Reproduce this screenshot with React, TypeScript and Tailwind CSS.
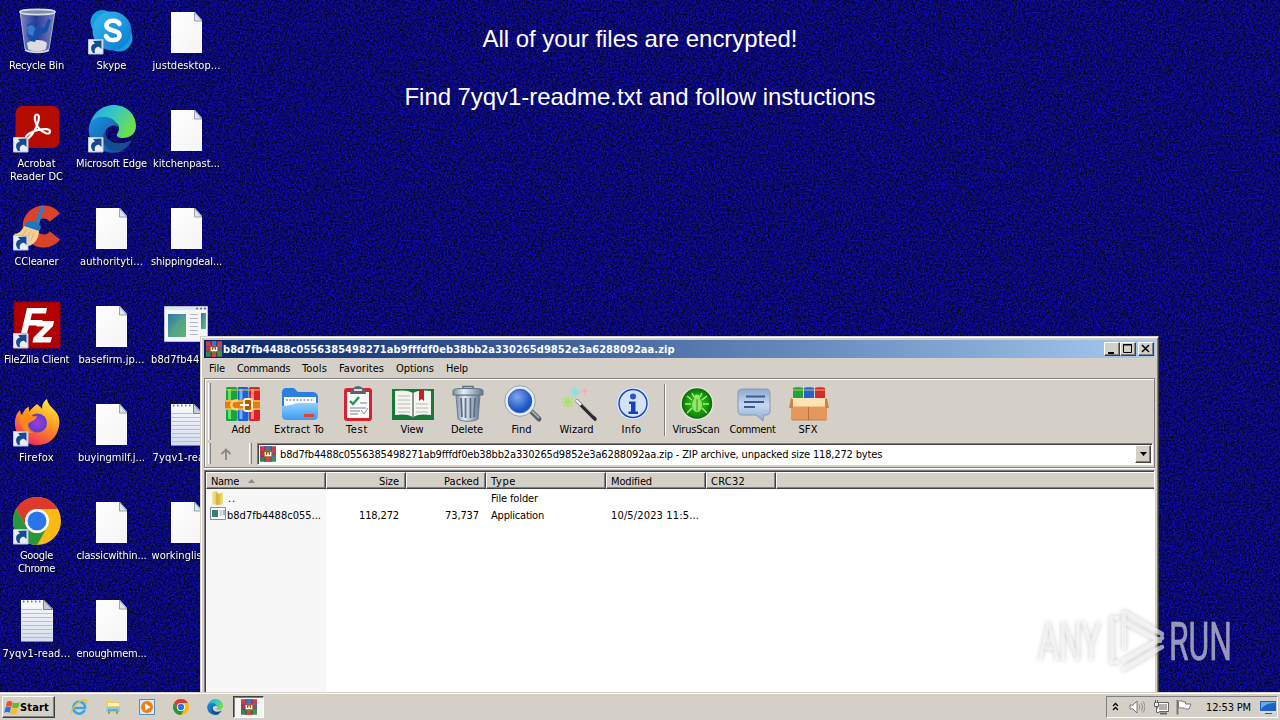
import { useLayoutEffect, useRef, useState, type ReactNode } from "react";

/* Text whose tracking is adjusted so that it spans a given width. */
function Fit({ w, children, className = "" }: { w?: number; children: string; className?: string }) {
  const ref = useRef<HTMLSpanElement>(null);
  const [space, setSpace] = useState(0);
  useLayoutEffect(() => {
    if (ref.current && w) {
      const natural = ref.current.getBoundingClientRect().width;
      setSpace((w - natural) / children.length);
    }
  }, [w, children]);
  return (
    <span ref={ref} className={"inline-block whitespace-pre " + className} style={{ letterSpacing: space }}>
      {children}
    </span>
  );
}

function Defs() {
  return (
    <svg className="absolute h-0 w-0" aria-hidden="true">
      <defs>
        <linearGradient id="sky" x1="0" y1="0" x2="1" y2="1"><stop offset="0" stopColor="#35b8ee" /><stop offset="1" stopColor="#0a78d0" /></linearGradient>
        <linearGradient id="edgeTop" x1="0" y1="0" x2="1" y2=".5"><stop offset="0" stopColor="#1fa0dc" /><stop offset=".5" stopColor="#35c6c8" /><stop offset="1" stopColor="#6be04a" /></linearGradient>
        <linearGradient id="edgeLow" x1="0" y1="0" x2="1" y2="1"><stop offset="0" stopColor="#1b8fe0" /><stop offset="1" stopColor="#124f9c" /></linearGradient>
        <linearGradient id="fox" x1=".8" y1="0" x2=".3" y2="1"><stop offset="0" stopColor="#fff04a" /><stop offset=".45" stopColor="#ff9a1f" /><stop offset="1" stopColor="#f0265e" /></linearGradient>
        <radialGradient id="foxCore"><stop offset="0" stopColor="#a03be0" /><stop offset="1" stopColor="#5a3fc8" /></radialGradient>
        <linearGradient id="paper" x1="0" y1="0" x2="1" y2="1"><stop offset="0" stopColor="#ffffff" /><stop offset="1" stopColor="#f4f4f6" /></linearGradient>
        <linearGradient id="note" x1="0" y1="0" x2="0" y2="1"><stop offset="0" stopColor="#fbfbfd" /><stop offset="1" stopColor="#d3dcec" /></linearGradient>
        <linearGradient id="metal" x1="0" y1="0" x2="1" y2="0"><stop offset="0" stopColor="#7c8ea4" /><stop offset=".35" stopColor="#e6edf4" /><stop offset=".7" stopColor="#9fb0c4" /><stop offset="1" stopColor="#63758c" /></linearGradient>
        <linearGradient id="folder" x1="0" y1="0" x2="0" y2="1"><stop offset="0" stopColor="#8fd0ff" /><stop offset="1" stopColor="#3c9bf2" /></linearGradient>
        <linearGradient id="chat" x1="0" y1="0" x2="0" y2="1"><stop offset="0" stopColor="#8fa9cf" /><stop offset=".5" stopColor="#c6d8ee" /><stop offset="1" stopColor="#8fabd2" /></linearGradient>
        <radialGradient id="lens" cx=".4" cy=".35"><stop offset="0" stopColor="#7fa8ee" /><stop offset="1" stopColor="#1c55c8" /></radialGradient>
        <radialGradient id="green"><stop offset="0" stopColor="#3fe01e" /><stop offset="1" stopColor="#0b7f08" /></radialGradient>
        <linearGradient id="app" x1="0" y1="0" x2="1" y2="1"><stop offset="0" stopColor="#2f78a8" /><stop offset="1" stopColor="#6fc07a" /></linearGradient>
        <linearGradient id="glass" x1="0" y1="0" x2="1" y2="0"><stop offset="0" stopColor="#a9b8d8" stopOpacity=".75" /><stop offset=".45" stopColor="#3a52b0" stopOpacity=".65" /><stop offset="1" stopColor="#a9b8d8" stopOpacity=".7" /></linearGradient>
        <linearGradient id="gold" x1="0" y1="0" x2="1" y2="0"><stop offset="0" stopColor="#f6ea9c" /><stop offset=".6" stopColor="#ddb93c" /><stop offset="1" stopColor="#f3e28a" /></linearGradient>
      </defs>
    </svg>
  );
}

function Noise() {
  return (
    <svg className="absolute inset-0" width="1280" height="720">
      <filter id="grain" x="0" y="0" width="100%" height="100%" colorInterpolationFilters="sRGB">
        <feTurbulence type="fractalNoise" baseFrequency="0.57" numOctaves="3" seed="4" />
        <feColorMatrix values="0.08 0.1 0 0 -0.05  0.08 0.1 0 0 -0.055  1.2 0 0 0 -0.16  0 0 0 0 1" />
      </filter>
      <rect width="1280" height="720" filter="url(#grain)" />
    </svg>
  );
}

const Shortcut = () => (
  <g>
    <path d="M.5 32.500h14.500v14.500h-14.500z" fill="#e6ebf4" stroke="#b8c4d8" />
    <path d="M5 46c-3-4-2.500-8.500 2-9.500l-2-2.500 8.500-.5v8.500l-2.500-2.200c-3 0-5 2-4 6.200z" fill="#164a90" />
  </g>
);

const RecycleBin = () => (
  <>
    <path d="M7 4l5 38c3 4 20 4 24 0l6-38z" fill="url(#glass)" stroke="#a8b4c8" />
    <path d="M14 36c4-4 17-4 20 0l-1 6c-3 3-15 3-18 0z" fill="#dcdce0" />
    <path d="M14 19c3-5 8-3 9 1l8 1 4-9 3 1-4 12-9 3-3 7-5-1-3-6z" fill="#174fa8" />
    <path d="M14 20c3-3 7-2 8 2l-2 7-5-2z" fill="#3a78d0" />
    <ellipse cx="24.500" cy="5" rx="17.500" ry="2.600" fill="#7d8da6" stroke="#d8dde6" strokeWidth="1.600" />
    <path d="M12 43c5 3 20 3 24 0" stroke="#d8d8d8" strokeWidth="2" fill="none" />
  </>
);
const Skype = () => (
  <>
    <g fill="#159fe2"><circle cx="14.500" cy="15" r="12" /><circle cx="31" cy="31" r="13.500" /></g>
    <circle cx="24" cy="24" r="19.500" fill="url(#sky)" />
    <path d="M31.500 17c-2-4.500-13-4.500-13 1.500 0 6.500 13 3.500 13 10 0 6-11.500 6-13.500.5" stroke="#fff" strokeWidth="4.600" strokeLinecap="round" fill="none" />
    <Shortcut />
  </>
);
const Acrobat = () => (
  <>
    <rect x="2.500" y="1" width="44" height="42" rx="7" fill="#b60b00" />
    <path d="M13 33c-1-3 6-6.500 12-8 7-1.600 12-1.200 12 1.500 0 4-7 1.500-11-3-4-4-6-14-2-14s1 11-3 17c-3 5-7 8.500-8 6.500z" fill="none" stroke="#fff" strokeWidth="2.200" />
    <Shortcut />
  </>
);
const EdgeMark = () => (
  <>
    <path d="M1 24C3 9 13 0 26 0c12 0 22 9 22 21 0 8-6 12-13 12-5 0-7-2-6-4 5-7 0-13-7-13C12 16 4 17 1 24z" fill="url(#edgeTop)" />
    <path d="M1 22c1-7 9-11 17-10 7 1 11 5 12 10-5-4-13 0-13 7 0 9 9 18 20 16C22 53-2 43 1 22z" fill="url(#edgeLow)" />
    <path d="M18 26c-2 9 8 13 15 12 5 0 9-2 11-4-2 7-9 13-17 12-11-1-16-13-9-20z" fill="#154b91" />
  </>
);
const Edge = () => (<><EdgeMark /><Shortcut /></>);
const CCleaner = () => (
  <>
    <path d="M42 14.500A14.500 14.500 0 1 0 42 32.500" stroke="#d9432c" strokeWidth="13" fill="none" />
    <path d="M28 3c2-1 3 0 3 2l-5 17-4-2z" fill="#2b7fc4" />
    <path d="M13 20c3-4 12-2 15 4l-2 5-15-5z" fill="#1f77bf" />
    <path d="M11 23l15 5c0 7-4 13-10 15C10 42 3 37 1 31c4 0 8-3 10-8z" fill="#f3cf94" />
    <path d="M9 33l5-7M13 37l5-9M18 38l3-8" stroke="#dba765" strokeWidth=".8" />
    <Shortcut />
  </>
);
const FileZilla = () => (
  <>
    <path d="M1 1h46v46h-46z" fill="#b30000" stroke="#8c0000" strokeWidth="2" strokeDasharray="2 2" />
    <path d="M14 7h20l-1 5.500h-14l-1.500 6.500h12l-1.500 5.500h-12l-3 12h-6z" fill="#fff" />
    <path d="M25 20h16l-1 5-11 11h10l-1.500 5.500h-18l1-5 11-11h-8z" fill="#fff" />
    <Shortcut />
  </>
);
const Firefox = () => (
  <>
    <path d="M24 5c2 2 4 3 5 5 0-5 2-8 5-10 1 6 5 8 9 13 3 4 4 8 3 14-2 12-10 19-22 19S2 37 2 25c0-6 1-10 5-14 0 2 1 4 2 5 2-4 4-8 7-8v5c2-3 5-6 8-8z" fill="url(#fox)" />
    <circle cx="24.500" cy="24" r="9.500" fill="url(#foxCore)" />
    <path d="M7 19c6-5 11-1 17-2-1 5-7 5-9 8-1 4 1 7 5 9-9 1-13-7-13-15z" fill="#ff8a1c" />
    <Shortcut />
  </>
);
const ChromeMark = () => (
  <>
    <circle cx="24" cy="24" r="24" fill="#f9bb11" />
    <path d="M3.200 12A24 24 0 0 1 44.800 12H24a12 12 0 0 0-10.400 18z" fill="#dd3a2c" />
    <path d="M3.200 12A24 24 0 0 0 24 48l10.400-18a12 12 0 0 1-20.800 0z" fill="#26963f" />
    <circle cx="24" cy="24" r="12" fill="#fff" />
    <circle cx="24" cy="24" r="9.500" fill="#2a76e8" />
  </>
);
const Chrome = () => (<><ChromeMark /><Shortcut /></>);
const Blank = () => (
  <>
    <path d="M8 5h24l7 8v33H8z" fill="url(#paper)" />
    <path d="M31.500 5.500v8.500h7.500z" fill="#dfe5ec" stroke="#8b98a8" strokeWidth=".9" />
  </>
);
const Note = () => (
  <>
    <path d="M8 5h23l9 9v33H8z" fill="url(#note)" />
    <path d="M9 14.500h20M9 18.500h30M9 22.500h30M9 26.500h30M9 30.500h30M9 34.500h30M9 38.500h30M9 42.500h30" stroke="#b2c0d6" />
    <path d="M10 6.500h20" stroke="#76808e" strokeWidth="2" strokeDasharray="1.500 2.500" />
    <path d="M30.500 5v9.500h9z" fill="#c4ccd8" stroke="#78828e" />
    <path d="M8 46.500h32" stroke="#77859b" />
  </>
);
const AppIcon = () => (
  <>
    <path d="M1.500 5.500h43v35h-43z" fill="#f4f6f8" stroke="#b7bfca" />
    <path d="M2 6h42v3H2z" fill="#dde5ee" />
    <path d="M33 7.500h2M37 7.500h2M41 7.500h2" stroke="#4f6c90" strokeWidth="1.500" />
    <path d="M5 13h18v23H5z" fill="url(#app)" />
    <path d="M6 34c2-9 8-15 17-18v20H6z" fill="#58a678" opacity=".6" />
    <path d="M27 13.500h8M27 17.500h8M27 21.500h8M27 25.500h8M27 29.500h8M27 33.500h8" stroke="#b6b9c0" />
    <path d="M38 12h5v16h-5z" fill="url(#app)" />
  </>
);

const desktop: [() => ReactNode, [string, number][]][] = [
  [RecycleBin, [["Recycle Bin", 55]]],
  [Acrobat, [["Acrobat", 38], ["Reader DC", 53]]],
  [CCleaner, [["CCleaner", 44]]],
  [FileZilla, [["FileZilla Client", 65]]],
  [Firefox, [["Firefox", 35]]],
  [Chrome, [["Google", 33], ["Chrome", 37]]],
  [Note, [["7yqv1-read...", 68]]],
  [Skype, [["Skype", 30]]],
  [Edge, [["Microsoft Edge", 71]]],
  [Blank, [["authorityti...", 63]]],
  [Blank, [["basefirm.jp...", 66]]],
  [Blank, [["buyingmilf.j...", 67]]],
  [Blank, [["classicwithin...", 70]]],
  [Blank, [["enoughmem...", 70]]],
  [Blank, [["justdesktop...", 68]]],
  [Blank, [["kitchenpast...", 67]]],
  [Blank, [["shippingdeal...", 71]]],
  [AppIcon, [["b8d7fb4488...", 71]]],
  [Note, [["7yqv1-read...", 68]]],
  [Blank, [["workinglist...  ", 70]]],
];

function Books() {
  return (
    <>
      <path d="M0 .5h5v15H0z" fill="#8a2f96" /><path d="M0 .5h5v4.500H0z" fill="#d23a4a" /><path d="M0 11h5v4.500H0z" fill="#2a8a48" />
      <path d="M5.500 0h5v16h-5z" fill="#39a848" /><path d="M5.500 0h5v4h-5z" fill="#3f6fd8" /><path d="M5.500 12h5v4h-5z" fill="#d8404c" />
      <path d="M11 .5h5v15h-5z" fill="#3a74cc" /><path d="M11 .5h5v4.500h-5z" fill="#d23a44" /><path d="M11 11h5v4.500h-5z" fill="#329a4a" />
      <path d="M5.200 0v16M10.800 0v16" stroke="#2a2034" strokeWidth=".7" />
      <path d="M0 6.500h16v3H0z" fill="#a8481f" />
      <path d="M4 4.500h8v7H4z" fill="#a5521f" />
      <path d="M5.300 6v3.500h5.400V6M8 6.500v3" stroke="#fff" strokeWidth="1.300" fill="none" />
    </>
  );
}
const BookIcon = ({ className = "" }: { className?: string }) => (
  <svg viewBox="0 0 16 16" className={"h-4 w-4 shrink-0 " + className}><Books /></svg>
);

const AddI = () => (
  <g transform="translate(1 0)">
    <rect x="1" y="1" width="11" height="34" rx="1.500" fill="#16a53a" /><path d="M3 3h3v30H3z" fill="#6adf6e" />
    <rect x="12.500" y="1" width="11" height="34" rx="1.500" fill="#1f5fd8" /><path d="M14.500 3h3v30h-3z" fill="#6fb2ff" />
    <rect x="24" y="1" width="11" height="34" rx="1.500" fill="#d8232c" /><path d="M26 3h3v30h-3z" fill="#ff8580" />
    <path d="M1 4h34" stroke="#f3c83a" strokeWidth="1.500" opacity=".7" />
    <path d="M0 14h35v10H0z" fill="#e57c13" /><path d="M0 15h35M0 23h35" stroke="#ffc14e" strokeWidth="1.500" />
    <path d="M13 14.500c-9-1-9 10 0 9" stroke="#ffd670" strokeWidth="2.500" fill="none" />
    <rect x="19" y="13" width="8" height="12" rx="2" fill="#b8590d" stroke="#fff0b8" strokeWidth="2" /><path d="M15 19h9" stroke="#fff" strokeWidth="2" />
  </g>
);
const ExtractI = () => (
  <>
    <path d="M0 8c0-4 1-6 4-6h7c3 0 3 4 6 4h13c4 0 6 2 6 6v15H0z" fill="#2a7fe0" />
    <path d="M2 11h32v14H2z" fill="#fff" /><path d="M4 14h28" stroke="#7b9bb8" strokeWidth="1.500" strokeDasharray="2 1.500" />
    <path d="M0 20c9 0 12-3 17-3h19v12c0 4-2 5-5 5H5c-4 0-5-2-5-5z" fill="url(#folder)" />
    <path d="M22 28h10v3H22z" fill="#e93f36" />
  </>
);
const TestI = () => (
  <>
    <rect x="4" y="2" width="28" height="33" rx="3" fill="#d5222e" /><path d="M7 6h22v26H7z" fill="#fafafa" />
    <path d="M11 3c3 0 3-3 7-3s4 3 7 3l1 5H10z" fill="#5d636c" /><path d="M14 4h8" stroke="#d8dde4" strokeWidth="2" />
    <path d="M10 15l3 3 6-7" stroke="#23994a" strokeWidth="2.400" fill="none" />
    <path d="M20 17h7M10 22h16M10 25h10M10 28h8" stroke="#a7a9b0" strokeWidth="1.500" /><path d="M21 24l3 4 4-6" stroke="#8a9298" fill="none" />
  </>
);
const ViewI = () => (
  <>
    <path d="M-3 3h42v31H-3z" fill="#16793a" />
    <path d="M0 5c7-1 13-1 18 2v24c-5-3-11-3-18-2zM36 5c-7-1-13-1-18 2v24c5-3 11-3 18-2z" fill="#f5f5ef" />
    <path d="M3 10h12M3 14h12M3 18h12M3 22h12M3 26h12M21 18h12M21 22h12M21 26h12" stroke="#b7b9b5" />
    <path d="M18 6v26" stroke="#6f7670" strokeWidth="1.500" /><path d="M24 3h5v12l-2.500-2-2.500 2z" fill="#c4202b" />
  </>
);
const DeleteI = () => (
  <>
    <path d="M6 9h24l-2 24c-4 3-16 3-20 0z" fill="url(#metal)" stroke="#6d7e92" />
    <path d="M11 12l1 19M15.500 12v20M20.500 12v20M25 12l-1 19" stroke="#5c6f86" strokeWidth="1.800" />
    <path d="M3 5c0-2 2-2.500 15-2.500S33 3 33 5v4H3z" fill="url(#metal)" stroke="#5b6c80" /><path d="M13 2.500v-2h10v2" fill="none" stroke="#5b6c80" strokeWidth="1.500" />
  </>
);
const FindI = () => (
  <>
    <path d="M26 25l8 8" stroke="#59616c" strokeWidth="5" strokeLinecap="round" /><path d="M27 25l7 7" stroke="#b5bcc6" strokeWidth="1.500" />
    <circle cx="15" cy="15" r="13.500" fill="url(#lens)" stroke="#e4edf6" strokeWidth="3.500" /><circle cx="15" cy="15" r="15.300" fill="none" stroke="#8293ac" strokeWidth=".8" />
    <circle cx="15" cy="15" r="11.800" fill="none" stroke="#2850a0" strokeWidth=".8" />
  </>
);
const WizardI = () => (
  <>
    <path d="M17 15l18 18" stroke="#2b2b2b" strokeWidth="3.600" strokeLinecap="round" /><path d="M16 14l5 5" stroke="#ececec" strokeWidth="3" /><path d="M22 18l12 12" stroke="#8a8a8a" />
    <circle cx="8" cy="16" r="3.800" fill="#b4ec7c" /><path d="M8 9.500v13M1.500 16h13M3.500 11.500l9 9M12.500 11.500l-9 9" stroke="#a9e070" strokeWidth="1.300" />
    <circle cx="15" cy="6" r="2.800" fill="#8fe8ea" /><path d="M15 .5v11M9.500 6h11M11 2l8 8M19 2l-8 8" stroke="#7fdfe4" />
    <path d="M24.500 1l1 3 3 1-3 1-1 3-1-3-3-1 3-1z" fill="#f4b0b0" />
  </>
);
const InfoI = () => (
  <>
    <circle cx="18" cy="17.500" r="16.500" fill="#e2ecf8" stroke="#c2cede" /><circle cx="18" cy="17.500" r="14" fill="#d4e2f6" stroke="#1e49b4" strokeWidth="1.500" />
    <circle cx="18" cy="10.500" r="3" fill="#2d56c4" /><path d="M14 15.500h6.500v10H23V28h-9.500v-2.500H16V18h-2z" fill="#1741b4" />
  </>
);
const VirusI = () => (
  <>
    <circle cx="18" cy="17.500" r="16" fill="#1b6a12" stroke="#dfe6dc" strokeWidth="1.500" /><circle cx="18" cy="17.500" r="13.800" fill="url(#green)" />
    <g stroke="#a9f07c" strokeWidth="1.400" fill="none"><path d="M13 14L8 10M23 14l5-4M12 18H6M24 18h6M13 22l-5 5M23 22l5 5M15 11l-2-4M21 11l2-4" /></g>
    <ellipse cx="18" cy="19" rx="5" ry="7" fill="#93e56c" /><circle cx="18" cy="11.500" r="3" fill="#93e56c" /><path d="M18 13v12" stroke="#2b9a1d" />
  </>
);
const CommentI = () => (
  <>
    <path d="M6 3h24c3 0 4 2 4 4v18c0 3-2 4-4 4h-2l-1 6-7-6H6c-3 0-4-2-4-4V7c0-3 2-4 4-4z" fill="url(#chat)" stroke="#8499bb" />
    <path d="M10 10.500h19M8 16h20M8 21h11" stroke="#3a5a92" strokeWidth="1.800" />
  </>
);
const SfxI = () => (
  <>
    <path d="M2 2c0-1 10-1 10 0v11H2z" fill="#1da53b" /><path d="M13 2c0-1 10-1 10 0v11H13z" fill="#2462d2" /><path d="M24 2c0-1 10-1 10 0v11H24z" fill="#d42a35" />
    <path d="M2 4h10M13 4h10M24 4h10" stroke="#f7c342" strokeWidth="1.500" opacity=".6" />
    <path d="M0 20h36v14H0z" fill="#e6985c" /><path d="M0 12h36v8.500H0z" fill="#fbe3b4" /><path d="M0 12l-2 10h4V13zM36 12l2 10h-4V13z" fill="#cf8048" />
    <path d="M17.500 21v13" stroke="#b8703c" /><path d="M1 34h34" stroke="#c07a45" />
  </>
);

function Tool({ icon: Icon, label, w, box }: { icon: () => ReactNode; label: string; w: number; box: string }) {
  return (
    <div className={"flex shrink-0 flex-col items-center " + box}>
      <svg viewBox="0 0 36 36" className="h-9 w-9 overflow-visible"><Icon /></svg>
      <Fit w={w} className="mt-px mr-[2px]">{label}</Fit>
    </div>
  );
}

const raised = "border border-t-white border-l-white border-r-[#404040] border-b-[#404040] shadow-[inset_-1px_-1px_0_#808080] bg-[#d4d0c8]";

function Head({ children, box, w }: { children?: string; box: string; w?: number }) {
  return (
    <div className={"flex h-[17px] shrink-0 items-center border-t border-l border-white border-b border-b-[#404040] bg-[#d4d0c8] " + box}>
      {children && <Fit w={w} className="mt-px">{children}</Fit>}
      {children === "Name" && <svg className="ml-[9px] h-1 w-[7px]" viewBox="0 0 7 4"><path d="M0 4L3.500 0 7 4z" fill="#8c8a84" /></svg>}
    </div>
  );
}

const divided = "border-r border-r-[#404040] shadow-[inset_-1px_-1px_0_#808080] pl-[4px] pr-[6px] ";

function Grip({ className = "" }: { className?: string }) {
  return <div className={"w-[3px] shrink-0 border-l border-l-white border-r border-r-[#808080] " + className} />;
}

function RarWindow() {
  return (
    <section className="absolute top-[336px] left-[200px] flex h-[384px] w-[959px] flex-col border border-t-[#d4d0c8] border-l-[#d4d0c8] border-r-[#404040] bg-[#d4d0c8] p-[3px] text-black shadow-[inset_1px_1px_0_#fff,inset_-1px_0_0_#808080]">
      <header className="flex h-[18px] shrink-0 items-center bg-linear-to-r from-[#0a246a] to-[#a6caf0] pr-px pl-[2px] text-white">
        <BookIcon />
        <Fit w={451} className="ml-[1px] font-bold">b8d7fb4488c0556385498271ab9fffdf0eb38bb2a330265d9852e3a6288092aa.zip</Fit>
        <div className="ml-auto flex">
          <span className={"h-[14px] w-4 " + raised}><svg viewBox="0 0 14 12" className="h-3 w-[14px]"><path d="M3 9h6v2H3z" /></svg></span>
          <span className={"h-[14px] w-4 " + raised}><svg viewBox="0 0 14 12" className="h-3 w-[14px]"><path d="M2.500 1.500h8v8h-8zM2 2h9" fill="none" stroke="#000" /></svg></span>
          <span className={"ml-[2px] h-[14px] w-4 " + raised}><svg viewBox="0 0 14 12" className="h-3 w-[14px]"><path d="M3 2l7 7M10 2l-7 7" stroke="#000" strokeWidth="1.600" /></svg></span>
        </div>
      </header>
      <nav className="flex h-[20px] shrink-0 items-center gap-3 pl-[5px]">
        <Fit w={16}>File</Fit><Fit w={53}>Commands</Fit><Fit w={25}>Tools</Fit><Fit w={45}>Favorites</Fit><Fit w={38}>Options</Fit><Fit w={22}>Help</Fit>
      </nav>
      <div className="flex h-[90px] shrink-0 flex-col border border-[#808080] shadow-[inset_1px_1px_0_#fff,0_1px_0_#fff]">
        <div className="flex h-[61px] shrink-0 pt-[7px] pl-[3px]">
          <Grip className="-mt-[3px] h-[57px]" />
          <Tool icon={AddI} label="Add" w={19} box="ml-[4px] w-[54px]" />
          <Tool icon={ExtractI} label="Extract To" w={50} box="w-[62px]" />
          <Tool icon={TestI} label="Test" w={22} box="w-[54px]" />
          <Tool icon={ViewI} label="View" w={23} box="w-[56px]" />
          <Tool icon={DeleteI} label="Delete" w={32} box="w-[54px]" />
          <Tool icon={FindI} label="Find" w={20} box="w-[55px]" />
          <Tool icon={WizardI} label="Wizard" w={34} box="w-[55px]" />
          <Tool icon={InfoI} label="Info" w={20} box="w-[55px]" />
          <div className="-mt-[2px] ml-[4px] h-[52px] w-[2px] border-r border-l border-r-white border-l-[#808080]" />
          <Tool icon={VirusI} label="VirusScan" w={47} box="ml-[2px] w-[58px]" />
          <Tool icon={CommentI} label="Comment" w={46} box="w-[55px]" />
          <Tool icon={SfxI} label="SFX" w={19} box="w-[56px]" />
        </div>
        <div className="flex h-[24px] items-center pt-[3px] pl-[3px]">
          <Grip className="h-[21px]" />
          <svg viewBox="0 0 12 12" className="mr-[12px] ml-[9px] h-3 w-3"><path d="M6 12V1.500M1.500 6L6 1.500 10.500 6" fill="none" stroke="#8c8780" strokeWidth="1.800" /></svg>
          <Grip className="ml-[5px] h-[21px]" />
          <div className="mr-[1px] ml-[5px] flex h-[22px] flex-1 items-center border border-[#808080] border-r-white border-b-white bg-white pr-px pl-[2px] shadow-[inset_1px_1px_0_#404040]">
            <BookIcon />
            <Fit w={602} className="mt-[2px] ml-[4px]">b8d7fb4488c0556385498271ab9fffdf0eb38bb2a330265d9852e3a6288092aa.zip - ZIP archive, unpacked size 118,272 bytes</Fit>
            <span className={"ml-auto flex h-[18px] w-4 items-center justify-center " + raised}><svg viewBox="0 0 7 4" className="h-1 w-[7px]"><path d="M0 0h7L3.500 4z" /></svg></span>
          </div>
        </div>
      </div>
      <div className="mt-[2px] flex h-[260px] shrink-0 flex-col border-t border-r border-l border-t-[#808080] border-r-white border-l-[#808080]">
        <div className="flex h-full flex-col border-t border-l border-[#404040] bg-white">
          <div className="flex">
            <Head box={divided + "w-[120px]"} w={28}>Name</Head>
            <Head box={divided + "w-[80px] justify-end"} w={20}>Size</Head>
            <Head box={divided + "w-[80px] justify-end"} w={35}>Packed</Head>
            <Head box={divided + "w-[120px]"} w={25}>Type</Head>
            <Head box={divided + "w-[100px]"} w={41}>Modified</Head>
            <Head box={divided + "w-[70px]"} w={34}>CRC32</Head>
            <Head box="flex-1 shadow-[inset_0_-1px_0_#808080]" />
          </div>
          <div className="flex flex-1">
            <div className="w-[120px] bg-[#f7f7f7]">
              <div className="flex h-[17px] items-center pl-1">
                <svg viewBox="0 0 16 16" className="h-4 w-4"><path d="M2 2l5-1 1 3 5-2v12l-4 1-7-1z" fill="url(#gold)" /><path d="M7 3v12" stroke="#c6a22e" /></svg>
                <Fit w={8} className="mt-[2px] ml-[2px]">..</Fit>
              </div>
              <div className="flex h-[17px] items-center pl-1">
                <svg viewBox="0 0 16 13" className="-mt-[2px] h-[13px] w-4 shrink-0"><path d="M.5.5h15v12H.5z" fill="#fff" stroke="#7a8fa6" /><path d="M2 3h6v7H2z" fill="#367f78" /><path d="M9.500 4h3M9.500 6h3M9.500 8h3" stroke="#9aa4b0" /><path d="M14 3v5" stroke="#367fa8" /></svg>
                <Fit w={94} className="mt-[2px] ml-px">b8d7fb4488c055...</Fit>
              </div>
            </div>
            <div className="w-[80px] pt-[18px] pr-[7px] text-right leading-[17px]"><Fit w={40}>118,272</Fit></div>
            <div className="w-[80px] pt-[18px] pr-[7px] text-right leading-[17px]"><Fit w={34}>73,737</Fit></div>
            <div className="flex w-[120px] flex-col items-start pt-px pl-[5px] leading-[17px]"><Fit w={47}>File folder</Fit><Fit w={53}>Application</Fit></div>
            <div className="w-[100px] pt-[18px] pl-[5px] leading-[17px]"><Fit w={88}>10/5/2023 11:5...</Fit></div>
          </div>
        </div>
      </div>
    </section>
  );
}

function Watermark() {
  return (
    <svg className="absolute top-[600px] left-[1030px] h-[90px] w-[230px] overflow-visible" viewBox="1030 600 230 90">
      <g className="drop-shadow-[0_0_2px_rgba(0,0,0,0.35)]">
        <g fill="#fff" fontSize="53" fontFamily="Roboto, sans-serif" opacity=".58" stroke="#fff" strokeWidth=".6">
          <text x="1038" y="660" textLength="63" lengthAdjust="spacingAndGlyphs">ANY</text>
          <text x="1169" y="660" textLength="63" lengthAdjust="spacingAndGlyphs">RUN</text>
        </g>
        <g fill="none" stroke="#fff" strokeWidth="4.500" strokeLinejoin="round" strokeLinecap="round" opacity=".62">
          <path d="M1124 648v-36l38 22M1117 618h-5v44h5M1124 660l38-22M1124 669l38-22M1124 622l36 19" />
        </g>
      </g>
    </svg>
  );
}

function Taskbar() {
  return (
    <footer className="absolute inset-x-0 bottom-0 flex h-[28px] items-start border-t border-[#d4d0c8] bg-[#d4d0c8] pt-[3px] pl-[2px] text-black shadow-[inset_0_1px_0_#fff]">
      <div className={"flex h-[22px] w-[53px] items-center pl-[1px] " + raised}>
        <svg viewBox="0 0 16 15" className="h-[15px] w-4 shrink-0">
          <path d="M3 2c2-1.500 3.500-1.500 5.500 0L7.200 7c-2-1-3.500-1-5.500 0z" fill="#e8522a" /><path d="M9 2.200c2 1.200 4.500 1.200 6.800 0L14.300 7.500c-2 1-4.500 1-6.500 0z" fill="#6cb52d" />
          <path d="M1.500 7.500c2-1 3.500-1 5.500 0l-1.400 5.300c-2-1-3.500-1-5.500 0z" fill="#2a72d8" /><path d="M7.500 8c2 1 4.500 1 6.500 0l-1.500 5.800c-2 1-4.500.8-6.500-.3z" fill="#f7bd20" />
        </svg>
        <Fit w={29} className="font-bold">Start</Fit>
      </div>
      <div className="ml-[16px] flex h-[22px] items-center gap-[18px]">
        <svg viewBox="0 0 16 16" className="h-4 w-4"><path d="M13.800 11a6 6 0 1 1 .2-4v2H4" fill="none" stroke="#3aa5e4" strokeWidth="2.600" /><path d="M1 14C-1 11 7 1 14 1c2 0 2 2 1 4" fill="none" stroke="#e9bd3a" strokeWidth="1.400" /></svg>
        <svg viewBox="0 0 16 16" className="h-4 w-4"><path d="M1 3l1-2h4l1 2h7v11H1z" fill="#e9cf6e" /><path d="M3 4h11v3H3z" fill="#fff3b8" /><path d="M1 8h14v5H1z" fill="#92cbe0" /><path d="M4 15v-4h8v4" fill="none" stroke="#5faed0" strokeWidth="2" /></svg>
        <svg viewBox="0 0 16 16" className="h-4 w-4"><path d="M.5.5h15v15H.5z" fill="#d8e8f4" stroke="#588fba" /><circle cx="8" cy="8" r="6" fill="#ef7f16" /><path d="M6 4.500L11.500 8 6 11.500z" fill="#fff" /></svg>
        <svg viewBox="0 0 48 48" className="h-4 w-4"><ChromeMark /></svg>
        <svg viewBox="0 0 48 48" className="h-4 w-4"><EdgeMark /></svg>
      </div>
      <div className="ml-[10px] flex h-[22px] w-[31px] items-center justify-center border border-t-[#404040] border-r-white border-b-white border-l-[#404040] bg-[#f6f5f3] shadow-[inset_1px_1px_0_#808080]"><BookIcon /></div>
      <div className="mr-[2px] ml-auto flex h-[22px] w-[172px] items-center border border-t-[#808080] border-r-white border-b-white border-l-[#808080] pl-[5px]">
        <svg viewBox="0 0 7 9" className="-mt-[2px] h-[9px] w-[7px]"><path d="M1 4l2.500-2.500L6 4M1 8l2.500-2.500L6 8" fill="none" stroke="#000" strokeWidth="1.300" /></svg>
        <svg viewBox="0 0 16 14" className="ml-[10px] h-[14px] w-4"><path d="M1 5h3l4-4v12L4 9H1z" fill="#fff" stroke="#777" /><path d="M10 4.500c1 1.500 1 3.500 0 5M12 3c2 2.500 2 5.500 0 8M14 1.500c2.500 3.500 2.500 7.500 0 11" fill="none" stroke="#8a8a8a" /></svg>
        <svg viewBox="0 0 16 16" className="ml-[8px] h-4 w-4"><path d="M4.500 3.500h11v9h-11z" fill="#b4b1ab" stroke="#666" /><path d="M5.500 4.500h9v7h-9z" fill="none" stroke="#fff" /><path d="M7 14.500h7" stroke="#666" strokeWidth="2" /><path d="M1.500 3.500h4v4h-4zM2.500 1v2.500M4.500 1v2.500M3.500 7.500v6h3" fill="#fff" stroke="#666" /></svg>
        <svg viewBox="0 0 16 16" className="ml-[7px] h-4 w-4"><path d="M1.500 1v14.500" stroke="#777" strokeWidth="2" /><path d="M2.500 2c3-1 4 1 7 1v2h5.500l-2 5c-3 .5-4-1-6-1s-3-.5-4.500 0z" fill="#fff" stroke="#777" /></svg>
        <Fit w={45} className="ml-[14px]">12:53 PM</Fit>
        <svg viewBox="0 0 16 14" className="ml-[9px] h-[14px] w-4"><path d="M0 1h16v10H0z" fill="#1c62c4" /><path d="M1 9c4-5 9-6 14-6V2H1z" fill="#67a8ec" /><path d="M0 11h16v2H0z" fill="#d8dce2" /><path d="M5 13.500h7" stroke="#555" /></svg>
      </div>
    </footer>
  );
}

export default function App() {
  return (
    <main className="relative h-[720px] w-[1280px] overflow-hidden bg-[#08086c] font-['DejaVu_Sans_Condensed','DejaVu_Sans',sans-serif] text-[11px] leading-[13px]">
      <Defs />
      <Noise />
      <div className="absolute inset-x-0 top-[25px] flex flex-col items-center gap-[30px] font-['Liberation_Sans',sans-serif] text-[24px] leading-[28px] text-white">
        <Fit w={315}>All of your files are encrypted!</Fit>
        <Fit w={471}>Find 7yqv1-readme.txt and follow instuctions</Fit>
      </div>
      <div className="relative -ml-px grid w-[225px] grid-flow-col grid-cols-[75px_75px_75px] grid-rows-[repeat(7,98px)] pt-[7px] text-white">
        {desktop.map(([Icon, lines], i) => (
          <div key={i} className="flex flex-col items-center">
            <svg viewBox="0 0 48 48" className="mb-[4px] ml-px h-12 w-12 shrink-0 overflow-visible"><Icon /></svg>
            {lines.map(([text, w]) => <Fit key={text} w={w} className="drop-shadow-[1px_1px_1px_#000]">{text}</Fit>)}
          </div>
        ))}
      </div>
      <RarWindow />
      <Taskbar />
      <Watermark />
    </main>
  );
}
